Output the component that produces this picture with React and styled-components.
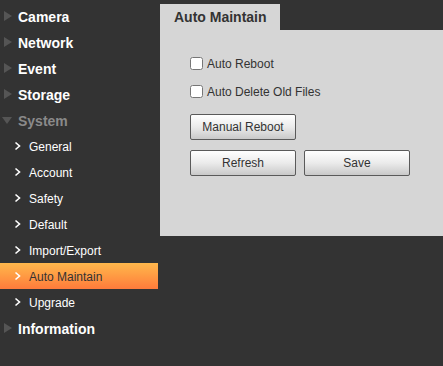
import styled, { createGlobalStyle } from "styled-components";

const GlobalStyle = createGlobalStyle`
  html, body {
    margin: 0;
    padding: 0;
    background-color: #333333;
  }
  * {
    box-sizing: border-box;
    font-family: "Liberation Sans", Arial, sans-serif;
  }
`;

const menu = [
  { label: "Camera" },
  { label: "Network" },
  { label: "Event" },
  { label: "Storage" },
  {
    label: "System",
    open: true,
    children: [
      "General",
      "Account",
      "Safety",
      "Default",
      "Import/Export",
      "Auto Maintain",
      "Upgrade",
    ],
  },
  { label: "Information" },
];

const active = "Auto Maintain";

function Triangle({ down }) {
  return (
    <svg width="10" height="12" viewBox="0 0 10 12">
      {down ? (
        <polygon points="0,3 10,3 5,10" fill="#555" />
      ) : (
        <polygon points="2,1 10,6 2,11" fill="#555" />
      )}
    </svg>
  );
}

function Chevron() {
  return (
    <svg width="8" height="10" viewBox="0 0 8 10">
      <polyline
        points="1.5,1.5 5.5,5 1.5,8.5"
        fill="none"
        stroke="#fff"
        strokeWidth="1.6"
      />
    </svg>
  );
}

export default function App() {
  return (
    <Page>
      <GlobalStyle />
      <Sidebar>
        {menu.map((m) => (
          <div key={m.label}>
            <TopItem $open={m.open}>
              <Triangle down={m.open} />
              <span>{m.label}</span>
            </TopItem>
            {m.children &&
              m.children.map((c) => (
                <SubItem key={c} $active={c === active}>
                  <Chevron />
                  <span>{c}</span>
                </SubItem>
              ))}
          </div>
        ))}
      </Sidebar>

      <Content>
        <Tab>Auto Maintain</Tab>
        <Panel>
          <CheckRow>
            <Check type="checkbox" />
            <span>Auto Reboot</span>
          </CheckRow>
          <CheckRow>
            <Check type="checkbox" />
            <span>Auto Delete Old Files</span>
          </CheckRow>
          <ButtonRow $top={2}>
            <Button>Manual Reboot</Button>
          </ButtonRow>
          <ButtonRow $top={10}>
            <Button>Refresh</Button>
            <Button>Save</Button>
          </ButtonRow>
        </Panel>
      </Content>
    </Page>
  );
}

const Page = styled.div`
  display: flex;
  width: 443px;
  height: 366px;
  background-color: #333333;
  overflow: hidden;
`;

const Sidebar = styled.div`
  width: 158px;
  flex-shrink: 0;
  padding-top: 3px;
`;

const TopItem = styled.div`
  display: flex;
  align-items: center;
  height: 26px;
  padding-left: 2px;
  gap: 6px;
  color: ${(p) => (p.$open ? "#8a8a8a" : "#ffffff")};
  font-size: 14px;
  font-weight: bold;

  span {
    padding-top: 2px;
  }
`;

const SubItem = styled.div`
  display: flex;
  align-items: center;
  height: 26px;
  padding-left: 14px;
  gap: 7px;
  font-size: 12px;
  color: ${(p) => (p.$active ? "#333333" : "#ffffff")};
  background: ${(p) =>
    p.$active
      ? "linear-gradient(to bottom, #ffb84c 0%, #ff9a43 50%, #ff7b3b 100%)"
      : "transparent"};

  span {
    padding-top: 2px;
  }
`;

const Content = styled.div`
  display: flex;
  flex-direction: column;
  margin-left: 2px;
  padding-top: 4px;
  flex: 1;
`;

const Tab = styled.div`
  width: 120px;
  height: 26px;
  padding-left: 14px;
  display: flex;
  align-items: center;
  background-color: #d6d6d6;
  color: #333333;
  font-size: 14px;
  font-weight: bold;
`;

const Panel = styled.div`
  height: 206px;
  background-color: #d6d6d6;
  padding: 26px 0 0 30px;
  display: flex;
  flex-direction: column;
`;

const CheckRow = styled.label`
  display: flex;
  align-items: center;
  height: 14px;
  margin-bottom: 14px;
  gap: 4px;
  font-size: 12px;
  color: #333333;

  span {
    padding-top: 1px;
  }
`;

const Check = styled.input`
  width: 13px;
  height: 13px;
  margin: 0;
`;

const ButtonRow = styled.div`
  display: flex;
  gap: 8px;
  margin-top: ${(p) => p.$top}px;
`;

const Button = styled.button`
  width: 106px;
  height: 26px;
  border: 1px solid #5a5a5a;
  border-radius: 2px;
  background: linear-gradient(to bottom, #ffffff 0%, #ebebeb 50%, #c9c9c9 100%);
  color: #333333;
  font-size: 12px;
  padding: 0;
`;
